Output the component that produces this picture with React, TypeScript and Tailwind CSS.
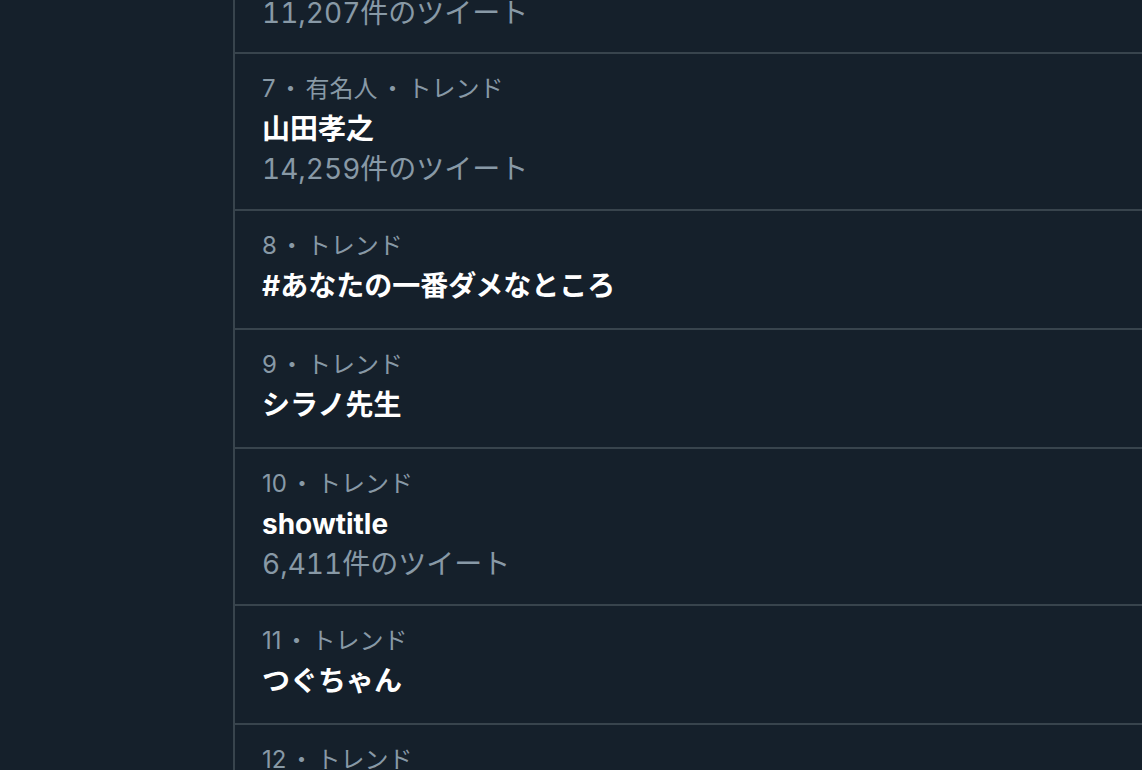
import React from 'react';

interface Trend {
  rank: number;
  category?: string;
  name?: string;
  count?: string;
}

const trends: Trend[] = [
  { rank: 7, category: '有名人', name: '山田孝之', count: '14,259件のツイート' },
  { rank: 8, name: '#あなたの一番ダメなところ' },
  { rank: 9, name: 'シラノ先生' },
  { rank: 10, name: 'showtitle', count: '6,411件のツイート' },
  { rank: 11, name: 'つぐちゃん' },
  { rank: 12 },
];

const font = { fontFamily: 'Inter, "Noto Sans CJK JP", sans-serif' };

function Dot() {
  return <span className="mx-[3px]">・</span>;
}

function TrendRow({ trend }: { trend: Trend }) {
  return (
    <div className={`border-b-2 border-[#38444d] pl-[27px] pt-[15px] ${trend.count ? 'pb-[20px]' : 'pb-[22px]'}`}>
      <div className="text-[24px] leading-[40px] text-[#8899a6] whitespace-nowrap">
        {trend.rank}
        <Dot />
        {trend.category && (
          <>
            {trend.category}
            <Dot />
          </>
        )}
        トレンド
      </div>
      {trend.name && (
        <div className="text-[28px] leading-[40px] font-bold text-white whitespace-nowrap">{trend.name}</div>
      )}
      {trend.count && (
        <div className="text-[28px] leading-[40px] text-[#8899a6] tabular-nums whitespace-nowrap">{trend.count}</div>
      )}
    </div>
  );
}

export default function App() {
  return (
    <div className="h-[770px] w-full overflow-hidden bg-[#15202b] flex" style={font}>
      {/* left nav column (empty in view) */}
      <div className="w-[233px] shrink-0" />

      {/* trends list */}
      <main className="flex-1 border-l-2 border-[#38444d] flex flex-col">
        {/* tail of previous trend, cut off above */}
        <div className="h-[54px] shrink-0 border-b-2 border-[#38444d] pl-[27px] pb-[19px] flex flex-col justify-end">
          <div className="text-[28px] leading-[40px] text-[#8899a6] tabular-nums whitespace-nowrap">11,207件のツイート</div>
        </div>
        {trends.map((t) => (
          <TrendRow key={t.rank} trend={t} />
        ))}
      </main>
    </div>
  );
}
